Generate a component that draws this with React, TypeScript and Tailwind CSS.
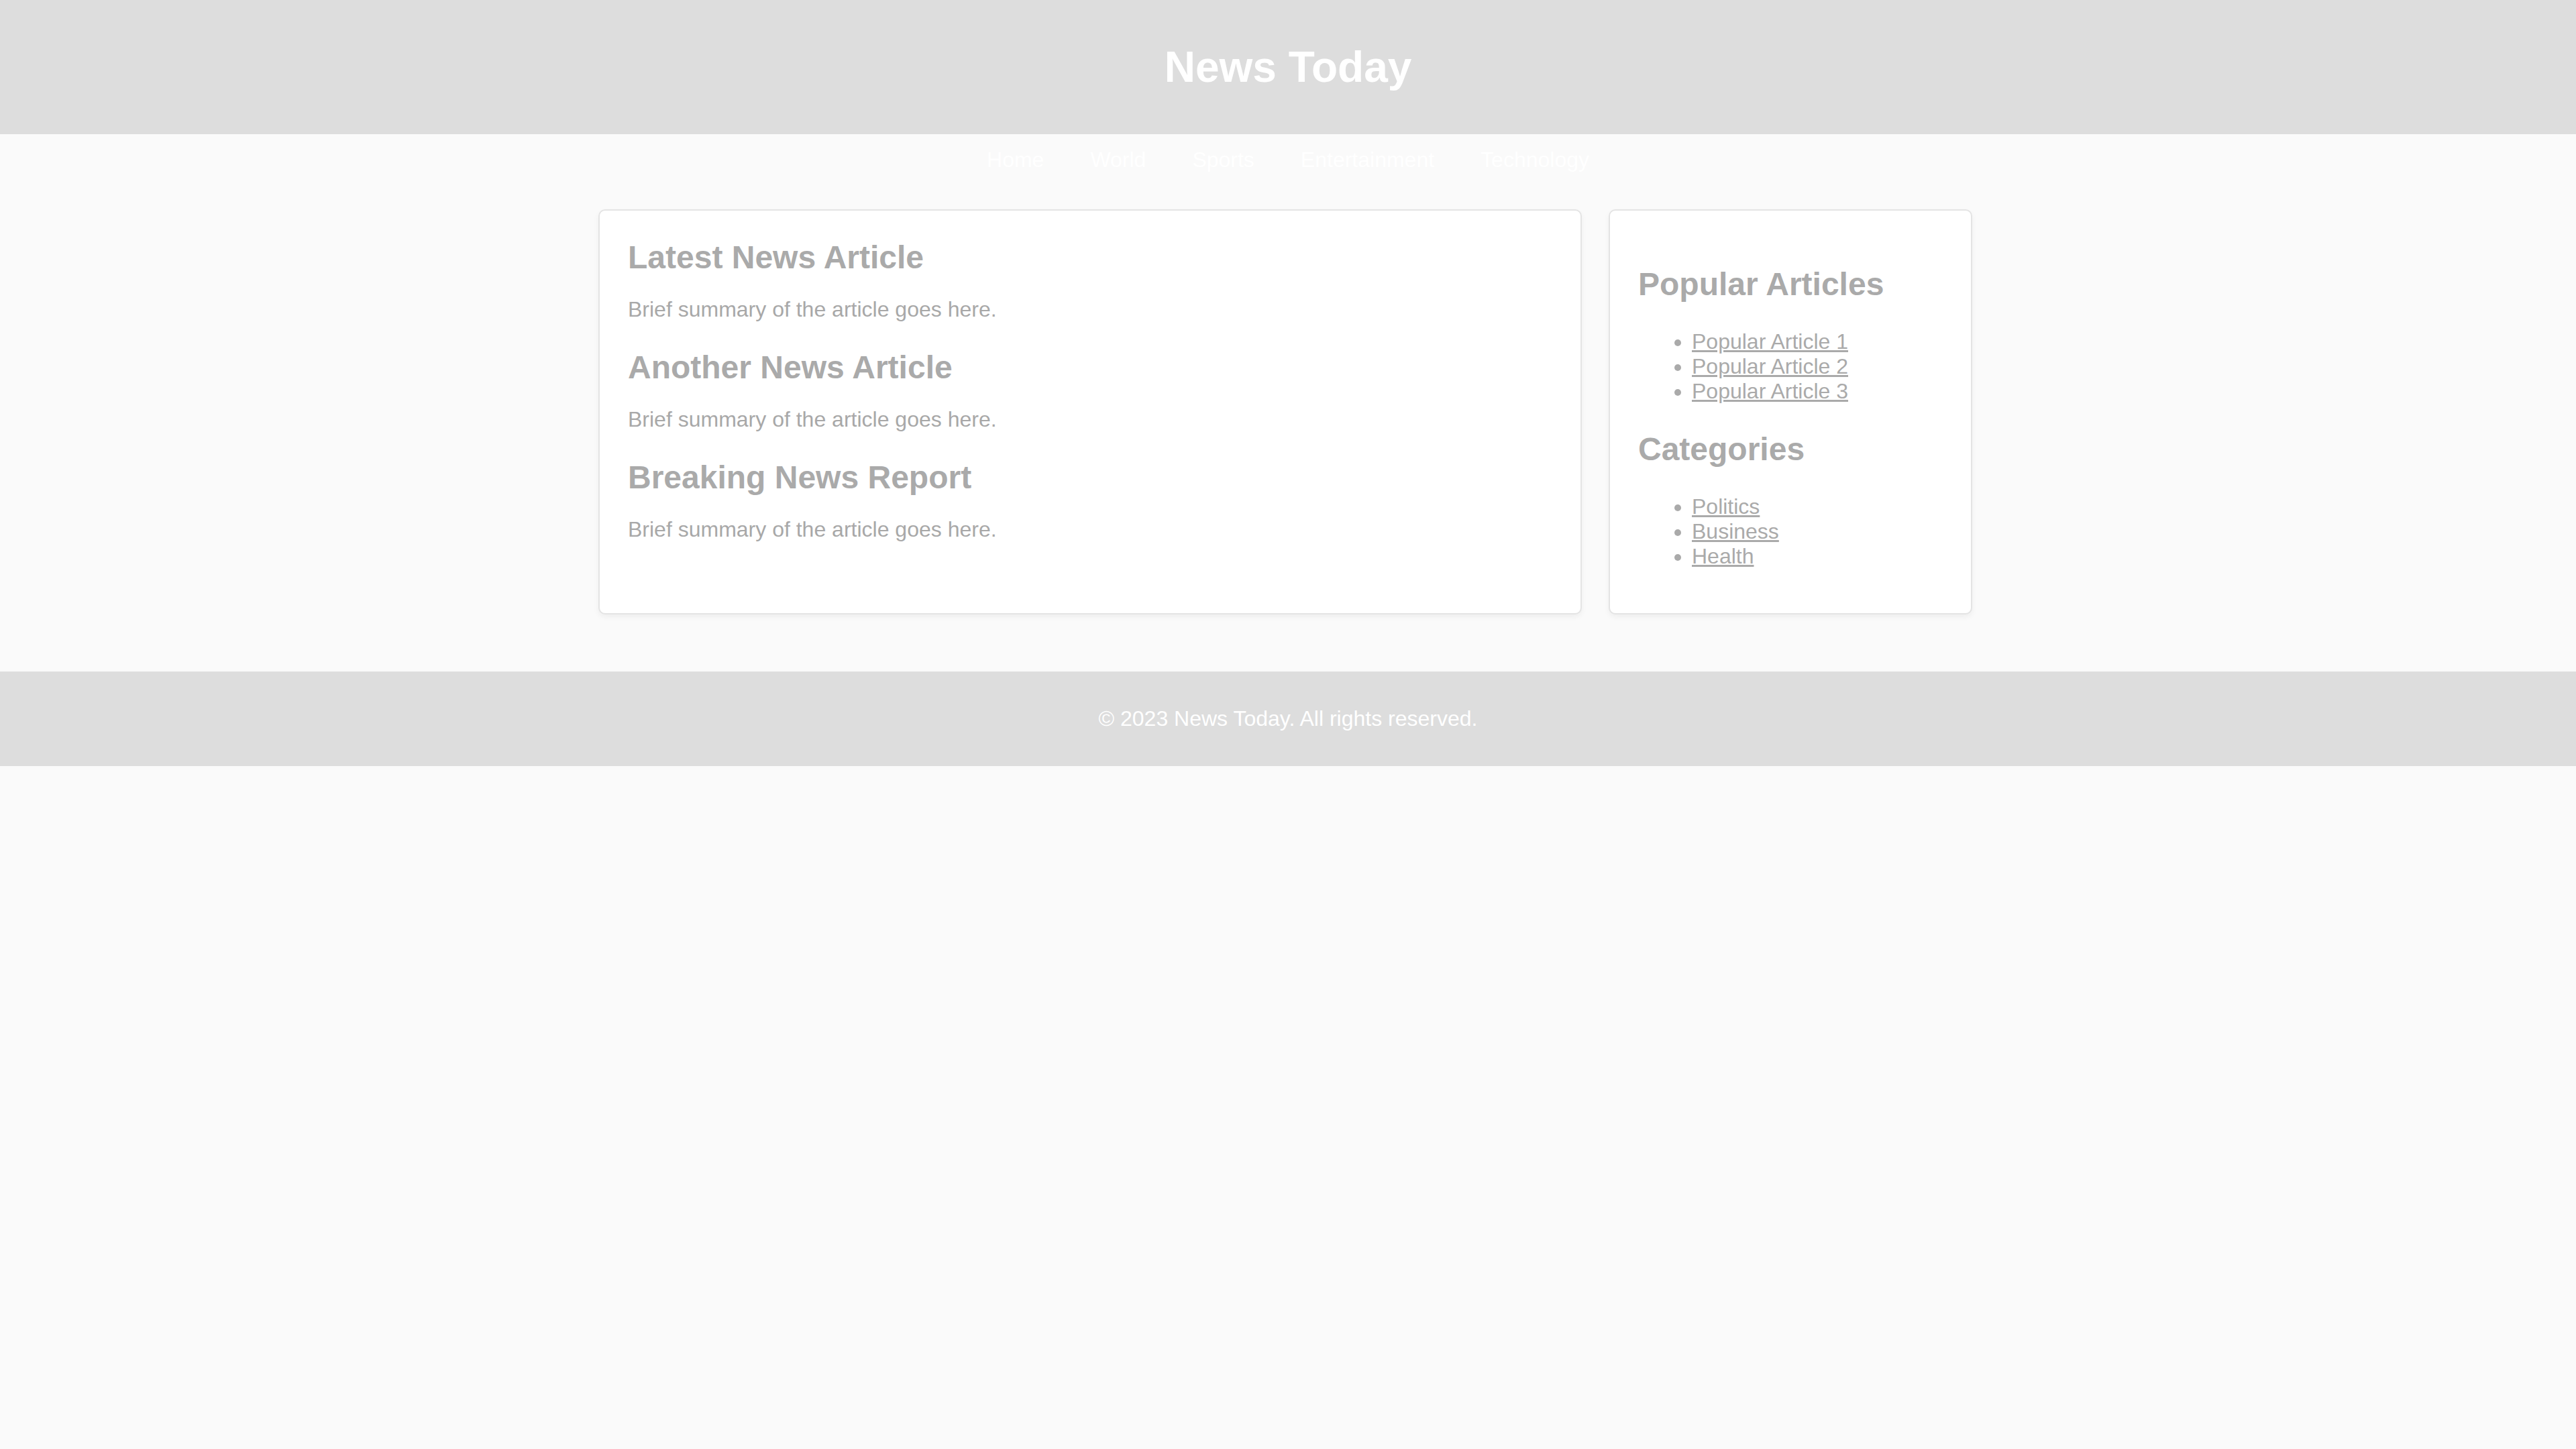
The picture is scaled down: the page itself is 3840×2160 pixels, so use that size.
const navItems = ['Home', 'World', 'Sports', 'Entertainment', 'Technology']

const articles = [
  { title: 'Latest News Article', summary: 'Brief summary of the article goes here.' },
  { title: 'Another News Article', summary: 'Brief summary of the article goes here.' },
  { title: 'Breaking News Report', summary: 'Brief summary of the article goes here.' },
]

const popular = ['Popular Article 1', 'Popular Article 2', 'Popular Article 3']
const categories = ['Politics', 'Business', 'Health']

function LinkList({ items }: { items: string[] }) {
  return (
    <ul className="list-disc pl-[80px] text-[32px] leading-[normal] text-[#aaaaaa]">
      {items.map((item) => (
        <li key={item}>
          <a href="#" className="underline">
            {item}
          </a>
        </li>
      ))}
    </ul>
  )
}

export default function App() {
  return (
    <div className="min-h-screen bg-[#fafafa] font-['Liberation_Sans',Arial,sans-serif] text-[32px] leading-[normal]">
      <header className="bg-[#dddddd] py-5 text-center">
        <h1 className="my-[43px] text-[64px] font-bold leading-[normal] text-white">News Today</h1>
      </header>

      <nav className="py-5">
        <ul className="flex justify-center gap-[69px] text-[32px] leading-[normal] text-white">
          {navItems.map((item) => (
            <li key={item}>
              <a href="#">{item}</a>
            </li>
          ))}
        </ul>
      </nav>

      <div className="mx-auto mt-[35px] mb-[85px] w-[2056px] pr-2">
        <div className="flex w-[2048px] items-stretch gap-10">
          <main className="flex-1 rounded-[10px] border-2 border-[#e4e4e4] bg-white p-[42px] shadow-[0_4px_8px_rgba(0,0,0,0.05)]">
            {articles.map((a) => (
              <article key={a.title} className="mb-10">
                <h2 className="text-[48px] font-bold leading-[normal] text-[#aaaaaa]">{a.title}</h2>
                <p className="mt-8 text-[32px] leading-[normal] text-[#a8a8a8]">{a.summary}</p>
              </article>
            ))}
          </main>

          <aside className="w-[542px] rounded-[10px] border-2 border-[#e4e4e4] bg-white px-[42px] pt-[42px] pb-[66px] shadow-[0_4px_8px_rgba(0,0,0,0.05)]">
            <h2 className="mt-10 mb-10 text-[48px] font-bold leading-[normal] text-[#aaaaaa]">Popular Articles</h2>
            <LinkList items={popular} />
            <h2 className="mt-10 mb-10 text-[48px] font-bold leading-[normal] text-[#aaaaaa]">Categories</h2>
            <LinkList items={categories} />
          </aside>
        </div>
      </div>

      <footer className="bg-[#dddddd] py-[52px] text-center text-[32px] leading-[normal] text-white">
        © 2023 News Today. All rights reserved.
      </footer>
    </div>
  )
}
